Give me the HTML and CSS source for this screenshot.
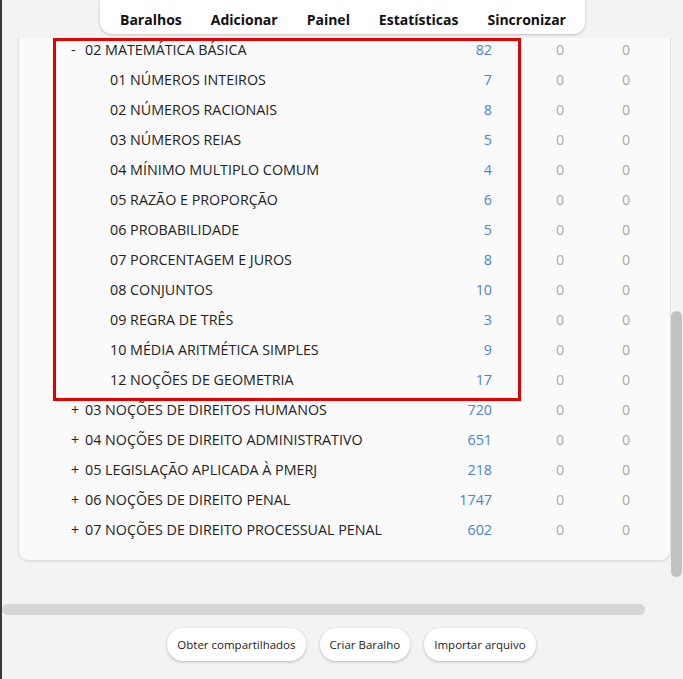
FILE: index.html
```html
<!DOCTYPE html>
<html lang="pt">
<head>
<meta charset="utf-8">
<title>Baralhos</title>
<link rel="stylesheet" href="styles.css">
</head>
<body>
<div class="app">
  <div class="pane">
    <div class="scrollarea">
      <div class="card">
        <div class="row parent"><span class="name"><span class="sign">-</span>02 MATEMÁTICA BÁSICA</span><span class="due">82</span><span class="z z1">0</span><span class="z z2">0</span></div>
        <div class="row child"><span class="name">01 NÚMEROS INTEIROS</span><span class="due">7</span><span class="z z1">0</span><span class="z z2">0</span></div>
        <div class="row child"><span class="name">02 NÚMEROS RACIONAIS</span><span class="due">8</span><span class="z z1">0</span><span class="z z2">0</span></div>
        <div class="row child"><span class="name">03 NÚMEROS REIAS</span><span class="due">5</span><span class="z z1">0</span><span class="z z2">0</span></div>
        <div class="row child"><span class="name">04 MÍNIMO MULTIPLO COMUM</span><span class="due">4</span><span class="z z1">0</span><span class="z z2">0</span></div>
        <div class="row child"><span class="name">05 RAZÃO E PROPORÇÃO</span><span class="due">6</span><span class="z z1">0</span><span class="z z2">0</span></div>
        <div class="row child"><span class="name">06 PROBABILIDADE</span><span class="due">5</span><span class="z z1">0</span><span class="z z2">0</span></div>
        <div class="row child"><span class="name">07 PORCENTAGEM E JUROS</span><span class="due">8</span><span class="z z1">0</span><span class="z z2">0</span></div>
        <div class="row child"><span class="name">08 CONJUNTOS</span><span class="due">10</span><span class="z z1">0</span><span class="z z2">0</span></div>
        <div class="row child"><span class="name">09 REGRA DE TRÊS</span><span class="due">3</span><span class="z z1">0</span><span class="z z2">0</span></div>
        <div class="row child"><span class="name">10 MÉDIA ARITMÉTICA SIMPLES</span><span class="due">9</span><span class="z z1">0</span><span class="z z2">0</span></div>
        <div class="row child"><span class="name">12 NOÇÕES DE GEOMETRIA</span><span class="due">17</span><span class="z z1">0</span><span class="z z2">0</span></div>
        <div class="row parent"><span class="name"><span class="sign">+</span>03 NOÇÕES DE DIREITOS HUMANOS</span><span class="due">720</span><span class="z z1">0</span><span class="z z2">0</span></div>
        <div class="row parent"><span class="name"><span class="sign">+</span>04 NOÇÕES DE DIREITO ADMINISTRATIVO</span><span class="due">651</span><span class="z z1">0</span><span class="z z2">0</span></div>
        <div class="row parent"><span class="name"><span class="sign">+</span>05 LEGISLAÇÃO APLICADA À PMERJ</span><span class="due">218</span><span class="z z1">0</span><span class="z z2">0</span></div>
        <div class="row parent"><span class="name"><span class="sign">+</span>06 NOÇÕES DE DIREITO PENAL</span><span class="due">1747</span><span class="z z1">0</span><span class="z z2">0</span></div>
        <div class="row parent"><span class="name"><span class="sign">+</span>07 NOÇÕES DE DIREITO PROCESSUAL PENAL</span><span class="due">602</span><span class="z z1">0</span><span class="z z2">0</span></div>
      </div>
      <div class="topbar">
        <nav class="nav">
          <span class="nav-item">Baralhos</span>
          <span class="nav-item">Adicionar</span>
          <span class="nav-item">Painel</span>
          <span class="nav-item">Estatísticas</span>
          <span class="nav-item">Sincronizar</span>
        </nav>
      </div>
      <div class="highlight"></div>
    </div>
    <div class="vscroll"><div class="vthumb"></div></div>
  </div>
  <div class="hscroll"><div class="hthumb"></div></div>
  <div class="actions">
    <button class="btn">Obter compartilhados</button>
    <button class="btn">Criar Baralho</button>
    <button class="btn">Importar arquivo</button>
  </div>
</div>
</body>
</html>
```
FILE: styles.css
```css
* { box-sizing: border-box; }
html, body { margin: 0; padding: 0; }
body {
  background: #f3f3f3;
  font-family: "Open Sans", "Noto Sans", "Liberation Sans", sans-serif;
  color: #222;
}
.app {
  width: 683px;
  height: 679px;
  border-left: 2px solid #3a3a3a;
  display: flex;
  flex-direction: column;
  overflow: hidden;
}
.pane {
  height: 600px;
  display: flex;
}
.scrollarea {
  flex: 1;
  position: relative;
  overflow: hidden;
}
.card {
  margin: -20px 0 0 16px;
  padding: 55px 10px 15px 0;
  background: #fafafa;
  border: 1px solid #e0e0e0;
  border-top: none;
  border-radius: 0 0 10px 10px;
  box-shadow: 0 1px 2px rgba(0,0,0,0.08);
}
.row {
  display: grid;
  grid-template-columns: 1fr 52px 100px 68px;
  height: 30px;
  line-height: 30px;
  font-size: 14.3px;
  padding-left: 52px;
  white-space: nowrap;
}
.name { color: #222; }
.child .name { padding-left: 39px; }
.sign { display: inline-block; width: 14px; }
.due { color: #4a84d2; text-align: right; }
.z { color: #aaa; text-align: center; }
.z1 { padding-left: 36px; }
.topbar {
  position: absolute;
  top: 0;
  left: 0;
  right: 0;
  height: 38px;
  background: #f3f3f3;
}
.nav {
  margin-left: 98px;
  width: 485px;
  height: 34px;
  background: #fff;
  border-radius: 0 0 12px 12px;
  box-shadow: 0 1px 3px rgba(0,0,0,0.22);
  display: flex;
  align-items: center;
  justify-content: space-between;
  padding: 4px 19px 0 20px;
  font-weight: 700;
  font-size: 14px;
  color: #111;
}
.highlight {
  position: absolute;
  left: 51px;
  top: 38px;
  width: 468px;
  height: 363px;
  border: 3px solid #e00000;
}
.vscroll {
  width: 12px;
  padding-top: 311px;
}
.vthumb {
  width: 11px;
  height: 266px;
  background: #c2c2c2;
  border-radius: 6px;
}
.hscroll {
  margin-top: 4px;
  height: 11px;
}
.hthumb {
  width: 643px;
  height: 11px;
  background: #d6d6d6;
  border-radius: 6px;
}
.actions {
  display: flex;
  justify-content: center;
  gap: 14px;
  padding: 13px 0 0 18px;
}
.btn {
  height: 33px;
  padding: 0 10px;
  background: #fff;
  border: none;
  border-radius: 16px;
  box-shadow: 0 1px 3px rgba(0,0,0,0.25);
  font-family: "Open Sans", "Noto Sans", "Liberation Sans", sans-serif;
  font-size: 11.5px;
  color: #222;
}
```
